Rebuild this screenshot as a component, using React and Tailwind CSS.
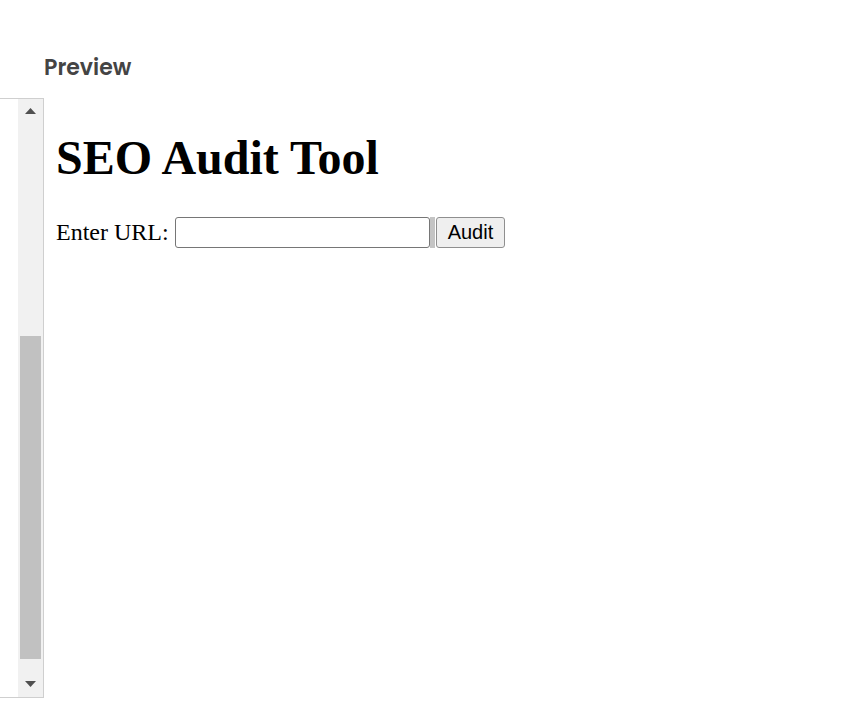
import React from 'react';

function Scrollbar() {
    return (
        <div className="w-[25px] h-full bg-[#f1f1f1] flex flex-col items-center">
            {/* up arrow */}
            <div className="h-[24px] w-full flex items-center justify-center">
                <svg width="11" height="6" viewBox="0 0 11 6">
                    <polygon points="5.5,0 11,6 0,6" fill="#505050" />
                </svg>
            </div>
            <div className="flex-1 w-full flex flex-col px-[2px]">
                <div className="h-[213px]" />
                <div className="h-[323px] bg-[#c1c1c1]" />
            </div>
            {/* down arrow */}
            <div className="h-[26px] w-full flex items-center justify-center">
                <svg width="11" height="6" viewBox="0 0 11 6">
                    <polygon points="0,0 11,0 5.5,6" fill="#505050" />
                </svg>
            </div>
        </div>
    );
}

export default function App() {
    return (
        <div className="w-[863px] h-[707px] bg-white overflow-hidden">
            {/* Header */}
            <div className="h-[98px] pl-[44px] pt-[53px]">
                <div className="text-[22px] font-semibold text-[#444] leading-[30px]" style={{ fontFamily: 'Poppins, "Open Sans", sans-serif' }}>
                    Preview
                </div>
            </div>

            <div className="flex h-[600px]">
                {/* Left panel scrolled away */}
                <div className="w-[44px] h-full border-t border-b border-r border-[#cfcfcf] flex justify-end">
                    <Scrollbar />
                </div>

                {/* Preview frame */}
                <div className="flex-1 px-[12px]" style={{ fontFamily: '"Liberation Serif", "Times New Roman", serif' }}>
                    <h1 className="mt-[32px] text-[48px] font-bold leading-[55px] text-black">SEO Audit Tool</h1>
                    <div className="mt-[29px] flex items-center text-[24px] text-black">
                        <span className="mr-[6px]">Enter URL:</span>
                        <input
                            type="text"
                            className="w-[255px] h-[31px] border border-[#767676] rounded-[3px] bg-white outline-none"
                        />
                        <div className="w-[5px] h-[31px] bg-[#c4c4c4] mr-[1px]" />
                        <button
                            className="h-[31px] px-[11px] border border-[#8f8f8f] rounded-[3px] bg-[#efefef] text-[20px] text-black leading-none"
                            style={{ fontFamily: '"Liberation Sans", Arial, sans-serif' }}
                        >
                            Audit
                        </button>
                    </div>
                </div>
            </div>
        </div>
    );
}
